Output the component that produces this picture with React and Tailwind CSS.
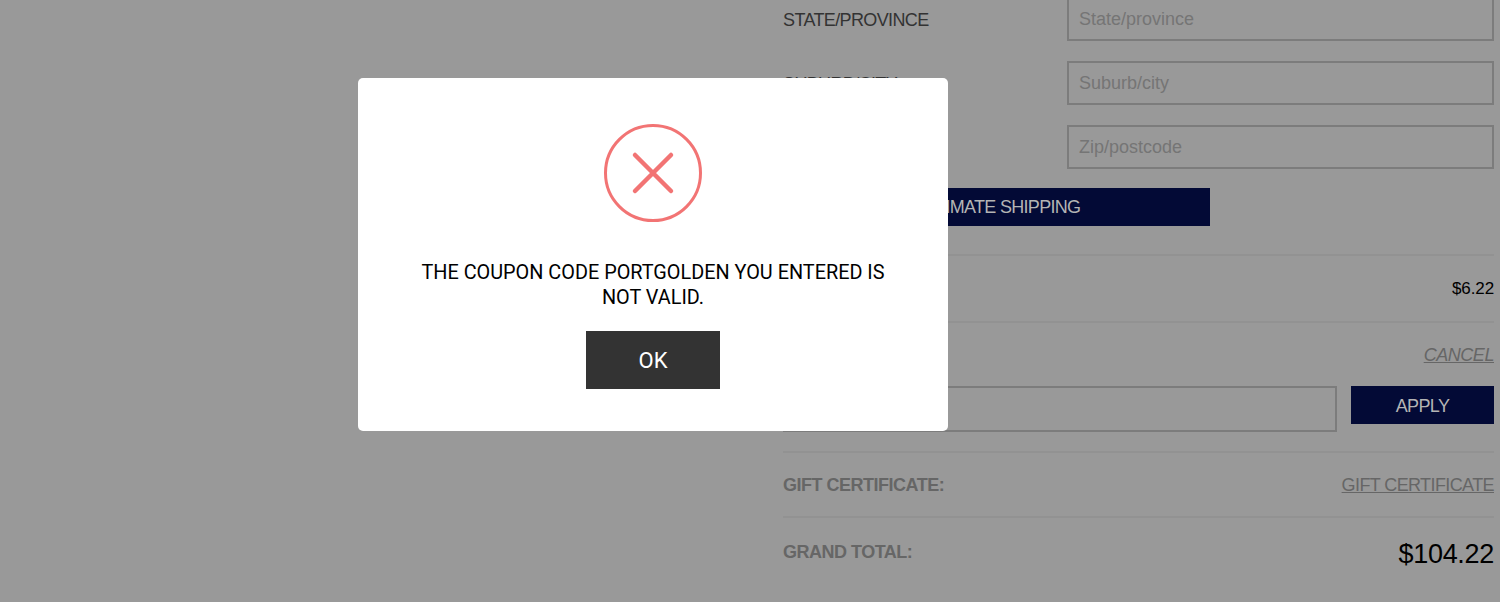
const labelClass = "w-[284px] shrink-0 pt-[2px] text-[18px] tracking-[-0.63px] text-[#333]";
const inputClass = "flex-1 min-w-0 h-[44px] border-2 border-[#7c7c7c] bg-transparent px-[10px] text-[18px] outline-none placeholder:text-[#757575]";
const summaryLabel = "pt-[2px] font-bold text-[18px] tracking-[-0.5px] text-[#666]";

function FormRow({ label, placeholder }) {
  return (
    <div className="flex items-center">
      <span className={labelClass}>{label}</span>
      <input className={inputClass} placeholder={placeholder} readOnly />
    </div>
  );
}

function SummaryRow({ children, className = "" }) {
  return (
    <div className={`flex items-center justify-between border-t-2 border-[#929292] ${className}`}>
      {children}
    </div>
  );
}

function ErrorModal() {
  return (
    <div className="absolute left-[358px] top-[78px] w-[590px] rounded-[5px] bg-white pt-[46px] pb-[42px] px-[60px] flex flex-col items-center font-['Roboto',sans-serif]">
      <svg width="98" height="98" viewBox="0 0 98 98" fill="none" stroke="#f27474">
        <circle cx="49" cy="49" r="47.5" strokeWidth="3" />
        <path d="M31 31L67 67M67 31L31 67" strokeWidth="4.5" strokeLinecap="round" />
      </svg>
      <p className="mt-[38px] text-center text-[19.85px] leading-[25px] text-black">
        THE COUPON CODE PORTGOLDEN YOU ENTERED IS NOT VALID.
      </p>
      <button className="mt-[21px] h-[58px] w-[134px] bg-[#333] text-[22px] text-white">OK</button>
    </div>
  );
}

export default function App() {
  return (
    <div className="relative h-[602px] overflow-hidden bg-[#999] font-['Liberation_Sans',sans-serif]">
      <div className="ml-[783px] w-[711px] -mt-[3px]">
        <div className="flex flex-col gap-[20px]">
          <FormRow label="STATE/PROVINCE" placeholder="State/province" />
          <FormRow label="SUBURB/CITY" placeholder="Suburb/city" />
          <FormRow label="" placeholder="Zip/postcode" />
        </div>
        <button className="mt-[19px] block h-[38px] w-[427px] bg-[#030a36] text-[18px] tracking-[-0.7px] text-[#b4b4b4]">
          ESTIMATE SHIPPING
        </button>
        <SummaryRow className="mt-[28px] h-[67px]">
          <span />
          <span className="text-[17px] tracking-[-0.1px] text-black">$6.22</span>
        </SummaryRow>
        <SummaryRow className="h-[65px]">
          <span />
          <a className="pt-[2px] italic underline text-[18px] tracking-[-0.45px] text-[#666]">CANCEL</a>
        </SummaryRow>
        <div className="flex items-start justify-between">
          <input className="h-[46px] w-[554px] border-2 border-[#7c7c7c] bg-transparent outline-none" readOnly />
          <button className="h-[38px] w-[143px] bg-[#030a36] pt-[2px] text-[18px] tracking-[-0.6px] text-[#b4b4b4]">APPLY</button>
        </div>
        <SummaryRow className="mt-[19px] h-[65px]">
          <span className={summaryLabel}>GIFT CERTIFICATE:</span>
          <a className="pt-[2px] underline text-[18px] tracking-[-0.6px] text-[#666]">GIFT CERTIFICATE</a>
        </SummaryRow>
        <SummaryRow className="h-[68px]">
          <span className={summaryLabel}>GRAND TOTAL:</span>
          <span className="pt-[6px] text-[27px] tracking-[-0.3px] text-black">$104.22</span>
        </SummaryRow>
      </div>
      <ErrorModal />
    </div>
  );
}
